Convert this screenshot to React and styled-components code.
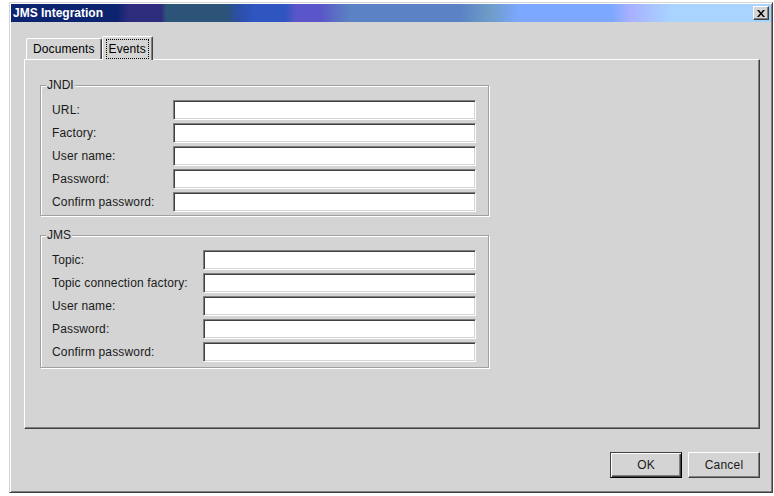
import React from 'react';
import styled, { createGlobalStyle } from 'styled-components';

const face = '#d4d4d4';
const shadow = '#808080';
const darkShadow = '#404040';
const uiFont = '"Liberation Sans", Arial, sans-serif';

const GlobalStyle = createGlobalStyle`
  html, body {
    margin: 0;
    padding: 0;
    background: #ffffff;
  }
  body {
    font-family: ${uiFont};
  }
`;

const Window = styled.div`
  box-sizing: border-box;
  margin: 2px 0 0 9px;
  width: 764px;
  height: 491px;
  padding: 1px;
  display: flex;
  flex-direction: column;
  background: ${face};
  border: 1px solid;
  border-color: ${face} ${darkShadow} ${darkShadow} ${face};
  box-shadow: inset 1px 1px 0 #ffffff, inset -1px -1px 0 ${shadow};
`;

const TitleBar = styled.div`
  height: 18px;
  flex: none;
  display: flex;
  align-items: center;
  justify-content: space-between;
  padding: 0 2px 0 2px;
  background: linear-gradient(
    to right,
    #0c2470 0%,
    #0c2470 14%,
    #2e2c7c 15.5%,
    #2e2c7c 19.8%,
    #2c5478 20.4%,
    #2c5478 28.2%,
    #2c4fa8 30%,
    #2f55c0 32%,
    #2f55c0 36%,
    #5a55c8 37.5%,
    #5a55c8 40.6%,
    #5a6cc4 42.5%,
    #5a82c4 44.6%,
    #5a82c4 59%,
    #6e9cc8 63%,
    #7ca8ff 67%,
    #7ca8ff 79%,
    #a8b0ff 81.5%,
    #a8c8ff 85%,
    #a8d4ff 87%,
    #a8d4ff 100%
  );
`;

const Title = styled.span`
  color: #ffffff;
  font: bold 12px ${uiFont};
  line-height: 18px;
`;

const CloseButton = styled.button`
  box-sizing: border-box;
  width: 16px;
  height: 14px;
  padding: 0;
  display: flex;
  align-items: center;
  justify-content: center;
  background: ${face};
  border: 1px solid;
  border-color: #ffffff ${darkShadow} ${darkShadow} #ffffff;
  box-shadow: inset -1px -1px 0 ${shadow};
`;

const Body = styled.div`
  flex: 1;
  display: flex;
  flex-direction: column;
  padding: 14px 11px 13px 13px;
`;

const TabStrip = styled.div`
  display: flex;
  align-items: flex-end;
  height: 23px;
  padding-left: 2px;
  position: relative;
  z-index: 1;
`;

const Tab = styled.div`
  box-sizing: border-box;
  height: ${(p) => (p.$active ? '24px' : '21px')};
  margin-bottom: ${(p) => (p.$active ? '-1px' : '0')};
  padding: 0 ${(p) => (p.$active ? '4px' : '6px')};
  display: flex;
  align-items: center;
  font-size: 12px;
  letter-spacing: 0.1px;
  color: #000;
  background: ${face};
  border: 1px solid;
  border-bottom: none;
  border-color: #ffffff ${darkShadow} transparent #ffffff;
  border-radius: 2px 2px 0 0;
  box-shadow: inset -1px 0 0 ${shadow};
`;

const FocusLabel = styled.span`
  outline: 1px dotted #000;
  padding: 2px 2px;
  line-height: 14px;
`;

const Panel = styled.div`
  box-sizing: border-box;
  height: 370px;
  flex: none;
  padding: 25px 15px 0;
  display: flex;
  flex-direction: column;
  align-items: flex-start;
  gap: 19px;
  border: 1px solid;
  border-color: #ffffff ${darkShadow} ${darkShadow} #ffffff;
  box-shadow: inset -1px -1px 0 ${shadow};
`;

const Group = styled.div`
  position: relative;
  box-sizing: border-box;
  width: 449px;
  padding: 14px 12px ${(p) => p.$bottom}px 11px;
  border: 1px solid #a0a0a0;
  box-shadow: 1px 1px 0 #ffffff, inset 1px 1px 0 #ffffff;
  display: grid;
  grid-template-columns: ${(p) => p.$labelWidth}px 1fr;
  row-gap: 3px;
  align-items: center;
`;

const Legend = styled.span`
  position: absolute;
  top: -8px;
  left: 5px;
  padding: 0 1px;
  background: ${face};
  font-size: 12px;
  line-height: 14px;
  color: #1a1a1a;
`;

const Label = styled.label`
  font-size: 12px;
  letter-spacing: 0.15px;
  color: #1a1a1a;
  white-space: nowrap;
`;

const TextField = styled.input`
  box-sizing: border-box;
  height: 20px;
  width: 100%;
  margin: 0;
  padding: 0 3px;
  font: 12px ${uiFont};
  background: #ffffff;
  border: 1px solid;
  border-color: ${shadow} #ffffff #ffffff ${shadow};
  box-shadow: inset 1px 1px 0 ${darkShadow}, inset -1px -1px 0 ${face};
  outline: none;
`;

const Footer = styled.div`
  margin-top: 23px;
  display: flex;
  justify-content: flex-end;
  gap: 6px;
`;

const Button = styled.button`
  box-sizing: border-box;
  width: 72px;
  height: 26px;
  padding: 0;
  font: 12px ${uiFont};
  letter-spacing: 0.2px;
  color: #1a1a1a;
  background: ${face};
  border: 1px solid;
  border-color: ${(p) =>
    p.$default ? `${darkShadow} #000 #000 ${darkShadow}` : `#ffffff ${darkShadow} ${darkShadow} #ffffff`};
  box-shadow: ${(p) =>
    p.$default
      ? `inset 1px 1px 0 #ffffff, inset -1px -1px 0 ${darkShadow}, inset -2px -2px 0 ${shadow}`
      : `inset -1px -1px 0 ${shadow}`};
`;

const jndiFields = ['URL:', 'Factory:', 'User name:', 'Password:', 'Confirm password:'];
const jmsFields = ['Topic:', 'Topic connection factory:', 'User name:', 'Password:', 'Confirm password:'];

const FieldGroup = ({ title, fields, labelWidth, bottom }) => (
  <Group $labelWidth={labelWidth} $bottom={bottom}>
    <Legend>{title}</Legend>
    {fields.map((f) => (
      <React.Fragment key={f}>
        <Label>{f}</Label>
        <TextField type={f.includes('assword') ? 'password' : 'text'} />
      </React.Fragment>
    ))}
  </Group>
);

export default function App() {
  return (
    <>
      <GlobalStyle />
      <Window>
        <TitleBar>
          <Title>JMS Integration</Title>
          <CloseButton aria-label="Close">
            <svg width="8" height="7" viewBox="0 0 8 7">
              <path d="M0 0h2l2 2.5L6 0h2L5 3.5 8 7H6L4 4.5 2 7H0l3-3.5z" fill="#000" />
            </svg>
          </CloseButton>
        </TitleBar>
        <Body>
          <TabStrip>
            <Tab>Documents</Tab>
            <Tab $active>
              <FocusLabel>Events</FocusLabel>
            </Tab>
          </TabStrip>
          <Panel>
            <FieldGroup title="JNDI" fields={jndiFields} labelWidth={121} bottom={3} />
            <FieldGroup title="JMS" fields={jmsFields} labelWidth={151} bottom={5} />
          </Panel>
          <Footer>
            <Button $default>OK</Button>
            <Button>Cancel</Button>
          </Footer>
        </Body>
      </Window>
    </>
  );
}
